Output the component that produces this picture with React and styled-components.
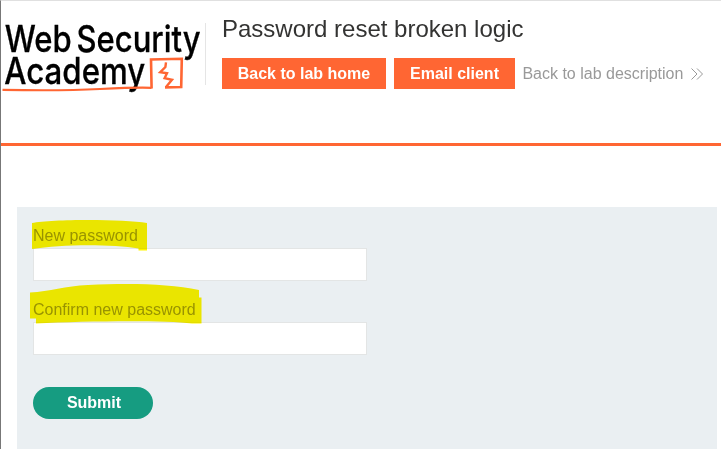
import React from "react";
import styled, { createGlobalStyle } from "styled-components";

const GlobalStyle = createGlobalStyle`
  * { box-sizing: border-box; }
  html, body { margin: 0; overflow: hidden; background: #fff; }
  body { font-family: "Liberation Sans", Arial, sans-serif; font-size: 16px; }
`;

const Page = styled.div`
  height: 449px;
  border-left: 1px solid #777;
  border-top: 1px solid #e0e0e0;
  overflow: hidden;
`;

const Header = styled.header`
  display: flex;
  align-items: flex-start;
  height: 145px;
  border-bottom: 3px solid #ff6633;
`;

const Logo = styled.svg`
  display: block;
  flex: none;
  width: 204px;
  height: 98px;
  overflow: visible;
  font-family: Inter, "Liberation Sans", sans-serif;
  font-size: 37px;
  font-weight: 500;
`;

const Wordmark = styled.g`
  fill: #000;
  stroke: #000;
  stroke-width: 0.3px;
`;

const Heading = styled.div`
  margin-top: 22px;
  height: 62px;
  padding-left: 16px;
  border-left: 1px solid #e5e5e5;
`;

const Title = styled.h2`
  margin: -9px 0 0;
  font-size: 24px;
  line-height: 30px;
  font-weight: 400;
  color: #333332;
  white-space: nowrap;
`;

const Actions = styled.div`
  display: flex;
  align-items: center;
  margin-top: 14px;
  gap: 8px;
`;

const ActionLink = styled.a`
  display: block;
  width: ${(p) => p.$width}px;
  height: 31px;
  line-height: 31px;
  text-align: center;
  white-space: nowrap;
  background: #ff6633;
  color: #fff;
  font-weight: 700;
`;

const BackLink = styled.a`
  display: flex;
  align-items: center;
  gap: 8px;
  margin-left: -0.6px;
  color: #999;
  line-height: 31px;
  white-space: nowrap;
`;

const Form = styled.form`
  display: flex;
  flex-direction: column;
  align-items: flex-start;
  margin: 61px 4px 0 16px;
  height: 260px;
  padding: 20px 16px 0;
  background: #eaeff2;
`;

const Field = styled.div`
  position: relative;
  width: 334px;
  height: 74px;
`;

const Label = styled.label`
  display: block;
  height: 21px;
  line-height: 18px;
  color: #999;
`;

const Input = styled.input`
  display: block;
  width: 334px;
  height: 33px;
  padding: 0 8px;
  border: 1px solid #e3e5e5;
  border-radius: 0;
  background: #fff;
  outline: none;
  font: inherit;
`;

const Marker = styled.svg`
  position: absolute;
  left: -5px;
  top: -20px;
  width: 180px;
  height: 50px;
  mix-blend-mode: multiply;
  pointer-events: none;
  fill: #fff500;
`;

const Submit = styled.button`
  margin-top: 12px;
  width: 120px;
  height: 32px;
  padding: 0 0 1px 2px;
  border: 0;
  border-radius: 16px;
  background: #169c81;
  color: #fff;
  font: 700 16px "Liberation Sans", Arial, sans-serif;
`;

const fields = [
  {
    id: "new-password",
    label: "New password",
    mark: "M4 16C24 12 96 12 119 16V43.5H110.5V41.5C84 37 34 37 4 42Z",
  },
  {
    id: "confirm-password",
    label: "Confirm new password",
    mark: "M2 11.5C22 10.5 37 5 60 4C104 2 142 3 171 9V16.5H173.5V42.5H164C136 39 58 40 8 42.5V37.5H2Z",
  },
];

export default function App() {
  return (
    <>
      <GlobalStyle />
      <Page>
        <Header>
          <Logo viewBox="1 1 204 98" role="img" aria-label="Web Security Academy">
            <Wordmark>
              <text x="4.8" y="51.5" textLength="67" lengthAdjust="spacingAndGlyphs">Web</text>
              <text x="76.5" y="51.5" textLength="124" lengthAdjust="spacingAndGlyphs">Security</text>
              <text x="4.3" y="84" textLength="141" lengthAdjust="spacingAndGlyphs">Academy</text>
            </Wordmark>
            <g fill="none" stroke="#ff6633">
              <path d="M2.5 89.8Q60 91 100 89T151.5 87.8" strokeWidth="2.2" />
              <path d="M151.6 88.5L151 59.4L181.8 58.8L181.2 87L165 87.4" strokeWidth="2.6" />
              <path d="M166 62.3L165.4 67L160.2 72.2L167 73.3L164.6 78.2L172 79.8L166 87" strokeWidth="2.4" />
            </g>
          </Logo>
          <Heading>
            <Title>Password reset broken logic</Title>
            <Actions>
              <ActionLink $width={164}>Back to lab home</ActionLink>
              <ActionLink $width={121}>Email client</ActionLink>
              <BackLink>
                Back to lab description
                <svg width="12" height="12" viewBox="0 0 12 12" fill="none" stroke="#999">
                  <path d="M.5.5L6 6L.5 11.5M6 .5L11.5 6L6 11.5" />
                </svg>
              </BackLink>
            </Actions>
          </Heading>
        </Header>
        <Form>
          {fields.map((f) => (
            <Field key={f.id}>
              <Label htmlFor={f.id}>{f.label}</Label>
              <Input id={f.id} type="password" />
              <Marker viewBox="0 0 180 50">
                <path d={f.mark} />
              </Marker>
            </Field>
          ))}
          <Submit type="button">Submit</Submit>
        </Form>
      </Page>
    </>
  );
}
